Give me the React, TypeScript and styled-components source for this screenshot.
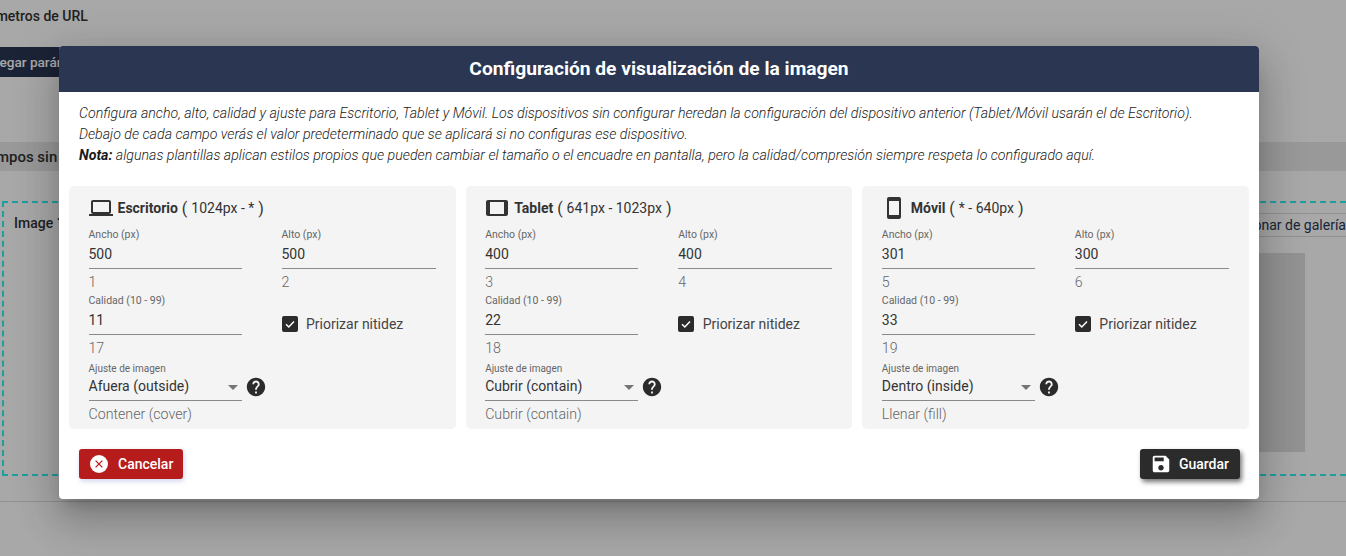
import React from "react";
import styled, { createGlobalStyle } from "styled-components";

const Global = createGlobalStyle`
  html, body { margin: 0; padding: 0; height: 100%; overflow: hidden; background: #fff; }
  body { font-family: Roboto, "Liberation Sans", sans-serif; }
  * { box-sizing: border-box; }
`;

const Page = styled.div`
  position: relative;
  width: 1346px;
  height: 556px;
  overflow: hidden;
  background: #fff;
`;

const BackPage = styled.div`
  display: flex;
  flex-direction: column;
  height: 100%;
  padding-top: 8px;
`;

const BackHeading = styled.div`
  font-size: 14px;
  line-height: 16px;
  font-weight: 500;
  color: #333;
  margin-left: -33px;
`;

const BackAddButton = styled.div`
  width: 300px;
  height: 30px;
  margin: 23px 0 0 -40px;
  padding-left: 18px;
  background: #2a3652;
  color: #fff;
  font-size: 13.6px;
  font-weight: 500;
  line-height: 30px;
  border-radius: 3px;
  white-space: nowrap;
`;

const BackBand = styled.div`
  height: 29px;
  margin-top: 65px;
  background: #e8e8e8;
  color: #333;
  font-size: 15px;
  font-weight: 500;
  line-height: 30px;
  white-space: nowrap;
  text-indent: -22px;
`;

const BackDropZone = styled.div`
  height: 275px;
  margin: 30px -10px 0 2px;
  border: 2px dashed #30f0f0;
  display: flex;
  justify-content: space-between;
  padding: 10px 0 0 10px;
`;

const BackLabel = styled.div`
  font-size: 14px;
  font-weight: 500;
  color: #333;
  line-height: 20px;
`;

const BackSide = styled.div`
  display: flex;
  flex-direction: column;
  width: 254px;
`;

const BackGalleryButton = styled.div`
  height: 24px;
  border-top: 1px solid #ddd;
  border-bottom: 1px solid #ddd;
  color: #2a3652;
  font-size: 14px;
  line-height: 22px;
  white-space: nowrap;
  text-align: right;
  padding-right: 8px;
`;

const BackPreview = styled.div`
  height: 199px;
  margin-top: 16px;
  background: #e0e0e0;
  width: 205px;
`;

const BackRule = styled.div`
  height: 1px;
  margin-top: 25px;
  background: #ddd;
`;

const Overlay = styled.div`
  position: absolute;
  inset: 0;
  background: rgba(0, 0, 0, 0.34);
`;

const Modal = styled.div`
  position: absolute;
  left: 59px;
  top: 46px;
  width: 1200px;
  height: 453px;
  background: #fff;
  border-radius: 4px;
  display: flex;
  flex-direction: column;
  box-shadow: 0 11px 15px -7px rgba(0, 0, 0, 0.2), 0 24px 38px 3px rgba(0, 0, 0, 0.14), 0 9px 46px 8px rgba(0, 0, 0, 0.12);
`;

const ModalHeader = styled.header`
  height: 46px;
  flex: none;
  background: #2a3652;
  border-radius: 4px 4px 0 0;
  color: #fff;
  font-size: 19.2px;
  font-weight: 700;
  line-height: 46px;
  text-align: center;
`;

const Intro = styled.div`
  padding: 11px 20px 0;
  font-size: 14.18px;
  font-weight: 300;
  line-height: 21px;
  font-style: italic;
  color: #1a1a1a;
  height: 94px;
  flex: none;
  b { font-weight: 700; }
`;

const Cards = styled.div`
  display: grid;
  grid-template-columns: repeat(3, 1fr);
  gap: 10px;
  padding: 0 10px;
`;

const Card = styled.section`
  height: 243px;
  background: #f4f4f4;
  border-radius: 5px;
  padding: 11px 20px 0 19.5px;
`;

const CardTitle = styled.div`
  display: flex;
  align-items: center;
  height: 22px;
  font-size: 14px;
  color: #333;
  white-space: pre;
  svg { flex: none; }
  b { font-weight: 700; }
`;

const TitleParen = styled.span`
  font-size: 16px;
`;

const Grid = styled.div`
  display: grid;
  grid-template-columns: 153px 154px;
  column-gap: 40px;
  margin-top: 8px;
  padding-top: 2px;
`;

const Field = styled.div`
  height: 66px;
`;

const FieldLabel = styled.div<{ $small?: boolean }>`
  font-size: ${(p) => (p.$small ? "10px" : "10.5px")};
  line-height: 12px;
  color: #666;
`;

const FieldValue = styled.div`
  display: flex;
  align-items: center;
  justify-content: space-between;
  height: 28px;
  font-size: 14px;
  line-height: 27px;
  color: #333;
  border-bottom: 1px solid #8a8a8a;
`;

const SelectValue = styled(FieldValue)`
  margin-top: -2px;
`;

const FieldHint = styled.div`
  font-size: 14.2px;
  font-weight: 300;
  line-height: 16px;
  margin-top: 5px;
  color: #666;
`;

const CheckRow = styled.div`
  display: flex;
  align-items: center;
  gap: 8.5px;
  font-size: 14px;
  color: #444;
  height: 66px;
  padding-bottom: 8px;
`;

const CheckBox = styled.span`
  width: 16px;
  height: 16px;
  border-radius: 2px;
  background: #2b2b2b;
  display: flex;
  align-items: center;
  justify-content: center;
`;

const SelectCaret = styled.span`
  width: 0;
  height: 0;
  margin: 2px 4px 0 0;
  border-left: 5px solid transparent;
  border-right: 5px solid transparent;
  border-top: 5px solid #757575;
`;

const SelectWrap = styled.div`
  position: relative;
  margin-top: 2px;
`;

const HelpBadge = styled.span`
  position: absolute;
  left: 156px;
  top: 13px;
  width: 22px;
  height: 22px;
`;

const Footer = styled.footer`
  display: flex;
  justify-content: space-between;
  padding: 20px 19px 0 20px;
`;

const Button = styled.button<{ $tone: "red" | "dark" }>`
  display: flex;
  align-items: center;
  height: 30px;
  border: 0;
  border-radius: 3px;
  padding: ${(p) => (p.$tone === "red" ? "0 10px" : "0 11px 0 10px")};
  gap: ${(p) => (p.$tone === "red" ? "9px" : "7px")};
  font-family: inherit;
  font-size: 14px;
  font-weight: 500;
  color: #fff;
  background: ${(p) => (p.$tone === "red" ? "#b71c1c" : "#2b2b2b")};
  box-shadow: ${(p) =>
    p.$tone === "red" ? "1px 2px 5px rgba(63, 81, 181, 0.25)" : "2px 3px 5px rgba(0, 0, 0, 0.55)"};
`;

const LaptopIcon = () => (
  <svg width="24" height="24" viewBox="0 0 24 24" fill="#333" style={{ marginRight: 5 }}>
    <path d="M20 18c1.1 0 2-.9 2-2V6c0-1.1-.9-2-2-2H4c-1.1 0-2 .9-2 2v10c0 1.1.9 2 2 2H0v2h24v-2h-4zM4 6h16v10H4V6z" />
  </svg>
);

const TabletIcon = () => (
  <svg width="24" height="24" viewBox="0 0 24 24" fill="#333" style={{ marginRight: 5 }}>
    <path d="M21 4H3c-1.1 0-2 .9-2 2v12c0 1.1.9 2 2 2h18c1.1 0 1.99-.9 1.99-2L23 6c0-1.1-.9-2-2-2zm-2 14H5V6h14v12z" />
  </svg>
);

const PhoneIcon = () => (
  <svg width="24" height="24" viewBox="0 0 24 24" fill="#333" style={{ marginRight: 5 }}>
    <path d="M17 1.01 7 1c-1.1 0-2 .9-2 2v18c0 1.1.9 2 2 2h10c1.1 0 2-.9 2-2V3c0-1.1-.9-1.99-2-1.99zM17 19H7V5h10v14z" />
  </svg>
);

const HelpIcon = () => (
  <svg width="22" height="22" viewBox="0 0 24 24" fill="#2b2b2b">
    <path d="M12 2C6.48 2 2 6.48 2 12s4.48 10 10 10 10-4.48 10-10S17.52 2 12 2zm1 17h-2v-2h2v2zm2.07-7.75l-.9.92C13.45 12.9 13 13.5 13 15h-2v-.5c0-1.1.45-2.1 1.17-2.83l1.24-1.26c.37-.36.59-.86.59-1.41 0-1.1-.9-2-2-2s-2 .9-2 2H8c0-2.21 1.79-4 4-4s4 1.79 4 4c0 .88-.36 1.68-.93 2.25z" />
  </svg>
);

const CancelIcon = () => (
  <svg width="20" height="20" viewBox="0 0 20 20">
    <circle cx="10" cy="10" r="9" fill="#fff" />
    <path d="M6.6 6.6l6.8 6.8M13.4 6.6l-6.8 6.8" stroke="#b71c1c" strokeWidth="1.3" />
  </svg>
);

const SaveIcon = () => (
  <svg width="22" height="22" viewBox="0 0 24 24" fill="#fff">
    <path d="M17 3H5c-1.11 0-2 .9-2 2v14c0 1.1.89 2 2 2h14c1.1 0 2-.9 2-2V7l-4-4zm-5 16c-1.66 0-3-1.34-3-3s1.34-3 3-3 3 1.34 3 3-1.34 3-3 3zm3-10H5V5h10v4z" />
  </svg>
);

const CheckIcon = () => (
  <svg width="12" height="12" viewBox="0 0 12 12" fill="none">
    <path d="M2 6.2l2.8 2.8L10 3.4" stroke="#fff" strokeWidth="1.5" />
  </svg>
);

type Device = {
  name: string;
  range: string;
  icon: React.ReactNode;
  width: [string, string];
  height: [string, string];
  quality: [string, string];
  fit: [string, string];
};

const devices: Device[] = [
  { name: "Escritorio", range: "1024px - *", icon: <LaptopIcon />, width: ["500", "1"], height: ["500", "2"], quality: ["11", "17"], fit: ["Afuera (outside)", "Contener (cover)"] },
  { name: "Tablet", range: "641px - 1023px", icon: <TabletIcon />, width: ["400", "3"], height: ["400", "4"], quality: ["22", "18"], fit: ["Cubrir (contain)", "Cubrir (contain)"] },
  { name: "Móvil", range: "* - 640px", icon: <PhoneIcon />, width: ["301", "5"], height: ["300", "6"], quality: ["33", "19"], fit: ["Dentro (inside)", "Llenar (fill)"] },
];

const NumberField = ({ label, value, hint }: { label: string; value: string; hint: string }) => (
  <Field>
    <FieldLabel>{label}</FieldLabel>
    <FieldValue>{value}</FieldValue>
    <FieldHint>{hint}</FieldHint>
  </Field>
);

const DeviceCard = ({ device }: { device: Device }) => (
  <Card>
    <CardTitle>
      {device.icon}
      <b>{device.name}</b>
      <TitleParen> ( </TitleParen>
      {device.range}
      <TitleParen> )</TitleParen>
    </CardTitle>
    <Grid>
      <NumberField label="Ancho (px)" value={device.width[0]} hint={device.width[1]} />
      <NumberField label="Alto (px)" value={device.height[0]} hint={device.height[1]} />
      <NumberField label="Calidad (10 - 99)" value={device.quality[0]} hint={device.quality[1]} />
      <CheckRow>
        <CheckBox>
          <CheckIcon />
        </CheckBox>
        Priorizar nitidez
      </CheckRow>
      <SelectWrap>
        <FieldLabel $small>Ajuste de imagen</FieldLabel>
        <SelectValue>
          {device.fit[0]}
          <SelectCaret />
        </SelectValue>
        <FieldHint>{device.fit[1]}</FieldHint>
        <HelpBadge>
          <HelpIcon />
        </HelpBadge>
      </SelectWrap>
    </Grid>
  </Card>
);

export default function App() {
  return (
    <Page>
      <Global />
      <BackPage>
        <BackHeading>Parámetros de URL</BackHeading>
        <BackAddButton>Agregar parámetro</BackAddButton>
        <BackBand>Campos sin</BackBand>
        <BackDropZone>
          <BackLabel>Image 1</BackLabel>
          <BackSide>
            <BackGalleryButton>Seleccionar de galería</BackGalleryButton>
            <BackPreview />
          </BackSide>
        </BackDropZone>
        <BackRule />
      </BackPage>
      <Overlay />
      <Modal>
        <ModalHeader>Configuración de visualización de la imagen</ModalHeader>
        <Intro>
          Configura ancho, alto, calidad y ajuste para Escritorio, Tablet y Móvil. Los dispositivos sin configurar heredan la configuración del dispositivo anterior (Tablet/Móvil usarán el de Escritorio).
          <br />
          Debajo de cada campo verás el valor predeterminado que se aplicará si no configuras ese dispositivo.
          <br />
          <b>Nota:</b> algunas plantillas aplican estilos propios que pueden cambiar el tamaño o el encuadre en pantalla, pero la calidad/compresión siempre respeta lo configurado aquí.
        </Intro>
        <Cards>
          {devices.map((d) => (
            <DeviceCard key={d.name} device={d} />
          ))}
        </Cards>
        <Footer>
          <Button $tone="red">
            <CancelIcon />
            Cancelar
          </Button>
          <Button $tone="dark">
            <SaveIcon />
            Guardar
          </Button>
        </Footer>
      </Modal>
    </Page>
  );
}
